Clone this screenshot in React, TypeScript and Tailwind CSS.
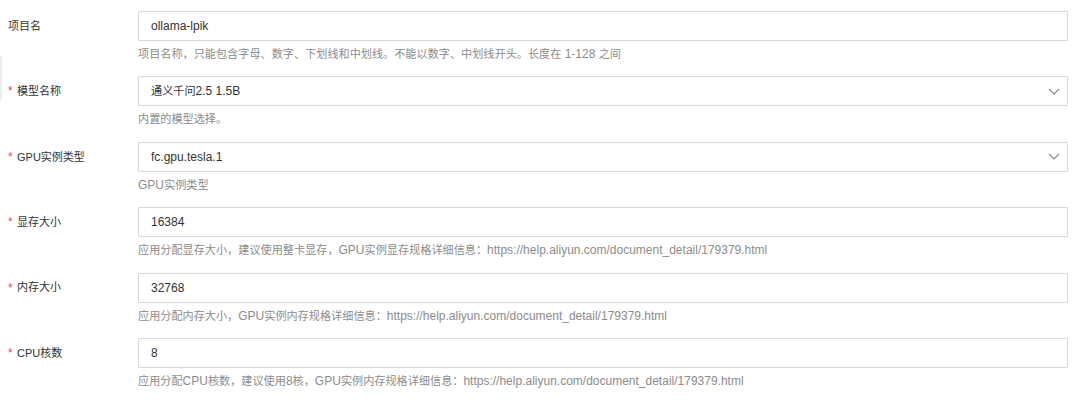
import React from 'react';

type Field = {
  label: string;
  required?: boolean;
  value: string;
  select?: boolean;
  help: string;
};

const FIELDS: Field[] = [
  {
    label: '项目名',
    value: 'ollama-lpik',
    help: '项目名称，只能包含字母、数字、下划线和中划线。不能以数字、中划线开头。长度在 1-128 之间',
  },
  { label: '模型名称', required: true, value: '通义千问2.5 1.5B', select: true, help: '内置的模型选择。' },
  { label: 'GPU实例类型', required: true, value: 'fc.gpu.tesla.1', select: true, help: 'GPU实例类型' },
  {
    label: '显存大小',
    required: true,
    value: '16384',
    help: '应用分配显存大小，建议使用整卡显存，GPU实例显存规格详细信息：https://help.aliyun.com/document_detail/179379.html',
  },
  {
    label: '内存大小',
    required: true,
    value: '32768',
    help: '应用分配内存大小，GPU实例内存规格详细信息：https://help.aliyun.com/document_detail/179379.html',
  },
  {
    label: 'CPU核数',
    required: true,
    value: '8',
    help: '应用分配CPU核数，建议使用8核，GPU实例内存规格详细信息：https://help.aliyun.com/document_detail/179379.html',
  },
];

// CJK glyphs render a bit smaller than the latin text in the original
const CJK = /([\u3000-\u303f\u4e00-\u9fff\uff00-\uffef]+)/;

function Mixed({ text }: { text: string }) {
  return (
    <>
      {text.split(CJK).map((part, i) =>
        CJK.test(part) ? (
          <span key={i} className="text-[11.15px]">{part}</span>
        ) : (
          <span key={i}>{part}</span>
        ),
      )}
    </>
  );
}

export default function App() {
  return (
    <div
      className="relative w-[1080px] h-[400px] overflow-hidden bg-white pt-[11px] pl-[8px] pr-[12px]"
      style={{ fontFamily: '"Liberation Sans", "Noto Sans CJK SC", sans-serif' }}
    >
      {/* left edge shade */}
      <div className="absolute left-0 top-[56px] h-[44px] w-[2px] bg-[#eeeeee]" />

      <div className="flex flex-col">
        {FIELDS.map(f => (
          <FormRow key={f.label} field={f} />
        ))}
      </div>
    </div>
  );
}

function FormRow({ field }: { field: Field }) {
  return (
    <div className="flex h-[65.4px]">
      <div className="w-[130px] shrink-0 h-[30px] flex items-center text-[11px] text-[#333333]">
        {field.required && <span className="text-[#e34d59] w-[9px] text-[12px] leading-none">*</span>}
        <span>{field.label}</span>
      </div>
      <div className="flex-1">
        <div className="h-[30px] border border-[#d6d8dc] rounded-[1px] flex items-center justify-between pl-[12px] pr-[7px] text-[12px] text-[#333333]">
          <span>
            <Mixed text={field.value} />
          </span>
          {field.select && (
            <svg width="12" height="7" viewBox="0 0 12 7" fill="none">
              <path d="M1 1l5 5 5-5" stroke="#8a8a8a" strokeWidth="1.1" />
            </svg>
          )}
        </div>
        <p className="mt-[4px] text-[12px] leading-[18px] text-[#8c8c8c]">
          <Mixed text={field.help} />
        </p>
      </div>
    </div>
  );
}
